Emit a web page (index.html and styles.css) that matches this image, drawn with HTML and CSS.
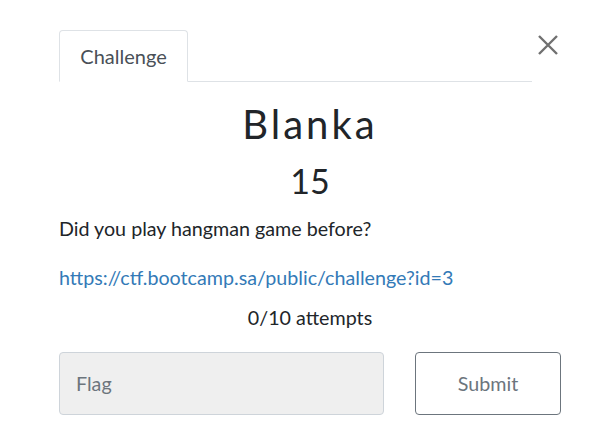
FILE: index.html
```html
<!DOCTYPE html>
<html>
<head>
<meta charset="utf-8">
<link rel="stylesheet" href="styles.css">
</head>
<body>
<div class="modal">
  <div class="head">
    <ul class="tabs">
      <li class="tab active">Challenge</li>
    </ul>
    <button class="close" aria-label="Close">
      <svg width="22" height="22" viewBox="0 0 22 22"><path d="M2 2 L20 20 M20 2 L2 20" stroke="#707070" stroke-width="2.4" fill="none"/></svg>
    </button>
  </div>
  <div class="body">
    <h2 class="name">Blanka</h2>
    <h3 class="value">15</h3>
    <p class="desc">Did you play hangman game before?</p>
    <p class="desc"><a href="#" class="link">https://ctf.bootcamp.sa/public/challenge?id=3</a></p>
    <p class="attempts">0/10 attempts</p>
    <div class="form">
      <input class="flag" type="text" placeholder="Flag">
      <button class="submit">Submit</button>
    </div>
  </div>
</div>
</body>
</html>
```
FILE: styles.css
```css
* { box-sizing: border-box; }
html, body { margin: 0; padding: 0; background: #fff; }
body { font-family: Lato, "Open Sans", sans-serif; color: #212529; }
.modal { padding: 30px 40px 0 59px; width: 612px; }
.head { display: flex; align-items: flex-start; }
.tabs { flex: 1; list-style: none; margin: 0; padding: 0; display: flex; border-bottom: 1px solid #dee2e6; height: 52px; max-width: 473px; }
.tab { height: 52px; padding: 0; line-height: 50px; font-size: 20px; color: #495057; border: 1px solid #dee2e6; border-bottom-color: #fff; border-radius: 4px 4px 0 0; background: #fff; width: 129px; text-align: center; }
.close { margin-left: 5px; margin-top: 4px; padding: 0; border: 0; background: none; width: 22px; height: 22px; }
.close svg { display: block; }
.body { width: 502px; }
.name { margin: 18px 0 0; text-align: center; font-weight: 400; font-size: 40px; letter-spacing: 3px; line-height: 48px; }
.value { margin: 13px 0 0; text-align: center; font-weight: 400; font-size: 34px; line-height: 40px; }
.desc { margin: 14px 0 0; font-size: 19.7px; line-height: 28px; }
.desc + .desc { margin-top: 21px; }
.link { color: #337ab7; text-decoration: none; }
.attempts { margin: 12px 0 0; text-align: center; font-size: 19.7px; line-height: 28px; }
.form { display: flex; gap: 31px; margin-top: 20px; }
.flag { width: 325px; height: 63px; background: #efefef; border: 1px solid #ced4da; border-radius: 4px; padding: 0 16px; font-family: inherit; font-size: 19.7px; color: #495057; }
.flag::placeholder { color: #6c757d; }
.submit { width: 146px; height: 63px; background: #fff; border: 1px solid #6c757d; border-radius: 4px; font-family: inherit; font-size: 19.7px; color: #6c757d; }
```
